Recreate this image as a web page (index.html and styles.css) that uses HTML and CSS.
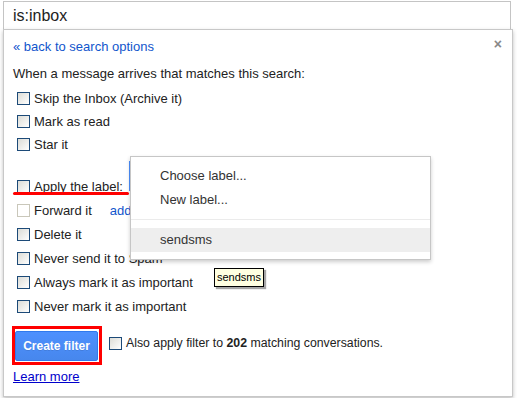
FILE: index.html
```html
<!DOCTYPE html>
<html lang="en">
<head>
  <meta charset="UTF-8" />
  <title>Create filter</title>
  <link rel="stylesheet" href="styles.css">
</head>
<body>

<div class="search">is:inbox</div>

<div class="panel">
  <div class="panel-head">
    <a class="back-link" href="#">« back to search options</a>
    <span class="close">×</span>
  </div>

  <p class="intro">When a message arrives that matches this search:</p>

  <div class="group group-top">
    <label class="row"><span class="check"></span>Skip the Inbox (Archive it)</label>
    <label class="row"><span class="check"></span>Mark as read</label>
    <label class="row"><span class="check"></span>Star it</label>
  </div>

  <div class="group group-bottom">
    <label class="row row-label">
      <span class="check"></span>Apply the label:
      <span class="label-select"></span>
      <span class="mark-line"></span>
    </label>
    <label class="row"><span class="check disabled"></span>Forward it <a class="add-link" href="#">add</a></label>
    <label class="row"><span class="check"></span>Delete it</label>
    <label class="row"><span class="check"></span>Never send it to Spam</label>
    <label class="row"><span class="check"></span>Always mark it as important</label>
    <label class="row"><span class="check"></span>Never mark it as important</label>
  </div>

  <div class="actions">
    <div class="mark-box">
      <button class="create-btn">Create filter</button>
    </div>
    <label class="also"><span class="check"></span><span>Also apply filter to <b>202</b> matching conversations.</span></label>
  </div>

  <a class="learn-more" href="#">Learn more</a>

  <!-- label dropdown, open -->
  <div class="menu">
    <div class="menu-item">Choose label...</div>
    <div class="menu-item">New label...</div>
    <div class="menu-sep"></div>
    <div class="menu-item active">sendsms</div>
  </div>

  <div class="tooltip">sendsms</div>
</div>

</body>
</html>
```

FILE: styles.css
```css
* {
  box-sizing: border-box;
  margin: 0;
  padding: 0;
}

body {
  font-family: 'Liberation Sans', Arial, sans-serif;
  font-size: 13px;
  color: #222;
  background: #fff;
  width: 517px;
  height: 398px;
  overflow: hidden;
}

.search {
  margin: 1px 0 0 3px;
  width: 508px;
  height: 28px;
  border: 1px solid #c4c4c4;
  border-bottom: none;
  padding: 4px 0 0 9px;
  font-size: 16px;
  line-height: 20px;
  color: #222;
}

.panel {
  position: relative;
  margin-left: 3px;
  width: 510px;
  border: 1px solid #c8c8c8;
  background: #fff;
  box-shadow: 0 2px 4px rgba(0, 0, 0, 0.25);
  padding: 9px 9px 11px 9px;
}

.panel-head {
  display: flex;
  justify-content: space-between;
  align-items: center;
  line-height: 16px;
}

.back-link {
  color: #15c;
  text-decoration: none;
}

.close {
  color: #888;
  font-weight: bold;
  font-size: 14px;
  margin-right: 1px;
  margin-top: -6px;
}

.intro {
  margin-top: 11px;
  line-height: 16px;
}

.group-top {
  margin-top: 5px;
}

.group-top .row {
  height: 23px;
}

.group-bottom {
  margin-top: 18px;
}

.group-bottom .row {
  height: 24px;
}

.row {
  position: relative;
  display: flex;
  align-items: center;
  white-space: nowrap;
}

.check {
  display: inline-block;
  width: 13px;
  height: 13px;
  margin: 0 4px 0 4px;
  border: 1px solid #1c4a78;
  background: linear-gradient(135deg, #dcdcd6, #f4f4f2 70%, #fff);
  flex-shrink: 0;
}

.check.disabled {
  border-color: #c9c7ba;
  background: #fff;
}

.label-select {
  align-self: flex-start;
  margin: -13px 0 0 6px;
  width: 40px;
  height: 30px;
  border-left: 2px solid #4d90fe;
}

.mark-line {
  position: absolute;
  left: 0;
  top: 18px;
  width: 116px;
  height: 3px;
  border-radius: 2px;
  background: #f00;
}

.add-link {
  color: #15c;
  text-decoration: none;
  margin-left: 18px;
}

.actions {
  display: flex;
  align-items: flex-start;
  margin-top: 8px;
}

.mark-box {
  margin-left: -1px;
  border: 3px solid #f00;
  padding: 2px 1px 1px 0;
}

.create-btn {
  display: block;
  width: 83px;
  height: 30px;
  border: 1px solid #3079ed;
  border-radius: 2px;
  background: linear-gradient(#4d90fe, #4787ed);
  color: #fff;
  font-family: 'Liberation Sans', Arial, sans-serif;
  font-size: 12px;
  font-weight: bold;
  text-shadow: 0 1px rgba(0, 0, 0, 0.1);
}

.also {
  display: flex;
  align-items: center;
  margin: 9px 0 0 7px;
  line-height: 16px;
  font-size: 12.3px;
}

.also .check {
  margin: 0 4px 0 0;
}

.learn-more {
  display: inline-block;
  margin-top: 4px;
  line-height: 16px;
  color: #00c;
}

.menu {
  position: absolute;
  left: 126px;
  top: 126px;
  width: 301px;
  padding: 7px 0;
  background: #fff;
  border: 1px solid #c6c6c6;
  box-shadow: 0 2px 4px rgba(0, 0, 0, 0.2);
}

.menu-item {
  height: 24px;
  line-height: 24px;
  padding-left: 29px;
  color: #333;
}

.menu-item.active {
  background: #eee;
}

.menu-sep {
  margin: 7px 0 8px;
  border-top: 1px solid #ebebeb;
}

.tooltip {
  position: absolute;
  left: 210px;
  top: 238px;
  height: 19px;
  padding: 0 2px;
  line-height: 17px;
  font-size: 11px;
  color: #000;
  background: #ffffe1;
  border: 1px solid #000;
  box-shadow: 2px 2px 1px rgba(0, 0, 0, 0.35);
}
```
